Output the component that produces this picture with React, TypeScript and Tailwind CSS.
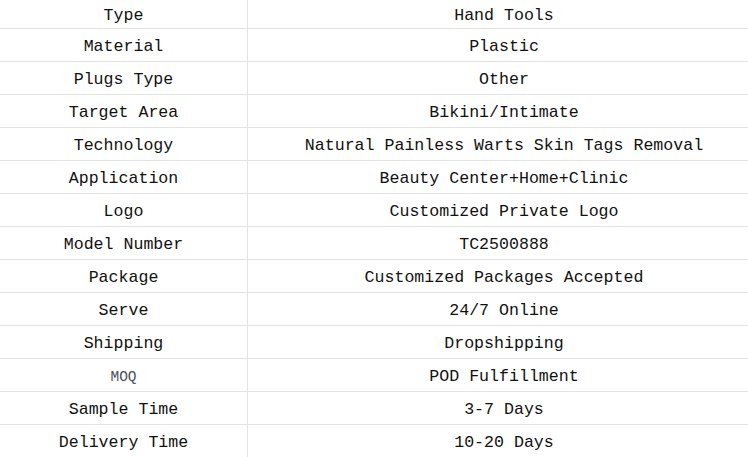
import React from "react";

const rows: [string, string][] = [
  ["Type", "Hand Tools"],
  ["Material", "Plastic"],
  ["Plugs Type", "Other"],
  ["Target Area", "Bikini/Intimate"],
  ["Technology", "Natural Painless Warts Skin Tags Removal"],
  ["Application", "Beauty Center+Home+Clinic"],
  ["Logo", "Customized Private Logo"],
  ["Model Number", "TC2500888"],
  ["Package", "Customized Packages Accepted"],
  ["Serve", "24/7 Online"],
  ["Shipping", "Dropshipping"],
  ["MOQ", "POD Fulfillment"],
  ["Sample Time", "3-7 Days"],
  ["Delivery Time", "10-20 Days"],
];

export default function App() {
  return (
    <div className="w-[748px] h-[457px] overflow-hidden bg-white">
      <div
        className="w-[760px] text-[#111] text-[16.6px] leading-none"
        style={{ fontFamily: '"Liberation Mono", "DejaVu Sans Mono", monospace' }}
      >
        {rows.map(([k, v], i) => {
          const first = i === 0;
          const last = i === rows.length - 1;
          return (
            <div
              key={k}
              className={
                "flex " +
                (first ? "h-[29px] " : last ? "h-[32px] " : "h-[33px] ") +
                (last ? "" : "border-b border-[#e3e3e3]")
              }
            >
              <div className="w-[248px] shrink-0 border-r border-[#e3e3e3] flex items-center justify-center pt-[4px]">
                {k === "MOQ" ? (
                  <span className="text-[14.5px] text-[#4b5060]">{k}</span>
                ) : (
                  <span>{k}</span>
                )}
              </div>
              <div className="flex-1 flex items-center justify-center pt-[4px]">{v}</div>
            </div>
          );
        })}
      </div>
    </div>
  );
}
